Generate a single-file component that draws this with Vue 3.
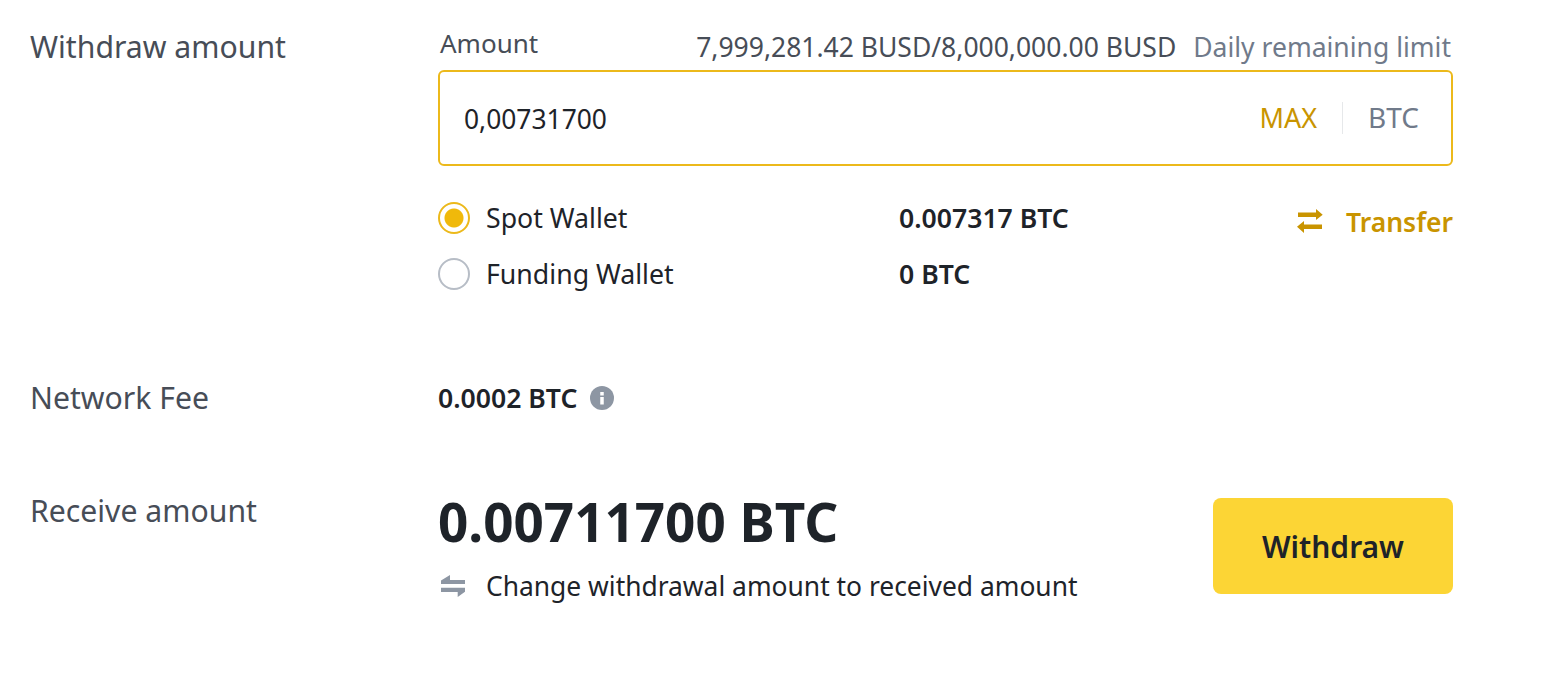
<template>
  <div class="page">
    <div class="row amount-row">
      <div class="label">Withdraw amount</div>
      <div class="content">
        <div class="amount-head">
          <span class="amount-title">Amount</span>
          <span class="limit">
            <span class="limit-value">7,999,281.42 BUSD/8,000,000.00 BUSD</span>
            <span class="limit-name">Daily remaining limit</span>
          </span>
        </div>
        <div class="amount-input">
          <span class="input-value">0,00731700</span>
          <span class="max">MAX</span>
          <span class="divider"></span>
          <span class="unit">BTC</span>
        </div>
        <div class="wallets">
          <div class="wallet-list">
            <div v-for="wallet in wallets" :key="wallet.name" class="wallet">
              <span class="radio" :class="{ checked: wallet.checked }"></span>
              <span class="wallet-name">{{ wallet.name }}</span>
              <span class="wallet-balance">{{ wallet.balance }}</span>
            </div>
          </div>
          <div class="transfer">
            <svg class="transfer-icon" viewBox="0 0 26 24" fill="currentColor">
              <path d="M1 3.500h18V0l6.700 5.700L19 11V8H1z" />
              <path d="M25 15.600H7V12L0 17.800 7 24v-4h18z" />
            </svg>
            <span class="transfer-text">Transfer</span>
          </div>
        </div>
      </div>
    </div>

    <div class="row fee-row">
      <div class="label">Network Fee</div>
      <div class="content fee">
        <span class="fee-value">0.0002 BTC</span>
        <svg class="info" viewBox="0 0 24 24">
          <circle cx="12" cy="12" r="12" fill="#8d96a3" />
          <rect x="10.250" y="11" width="3.500" height="7.500" fill="#fff" />
          <rect x="10.250" y="6" width="3.500" height="3.500" fill="#fff" />
        </svg>
      </div>
    </div>

    <div class="row receive-row">
      <div class="label">Receive amount</div>
      <div class="content receive">
        <div>
          <div class="receive-value">0.00711700 BTC</div>
          <div class="change">
            <svg class="change-icon" viewBox="0 0 26 22" fill="#8d96a3">
              <path d="M1 9V5.500L10 0v5h15v4z" />
              <path d="M1 12.700h24v4L17.700 22v-5H1z" />
            </svg>
            <span>Change withdrawal amount to received amount</span>
          </div>
        </div>
        <button class="withdraw">Withdraw</button>
      </div>
    </div>
  </div>
</template>

<script setup>
const wallets = [
  { name: 'Spot Wallet', balance: '0.007317 BTC', checked: true },
  { name: 'Funding Wallet', balance: '0 BTC', checked: false }
]
</script>

<style>
html,
body {
  background: #fff;
}
</style>

<style scoped>
.page {
  width: 1544px;
  height: 694px;
  box-sizing: border-box;
  padding: 28px 91px 0 30px;
  font-family: 'Noto Sans', 'Liberation Sans', sans-serif;
  color: #1e2329;
  background: #fff;
}

.row {
  display: flex;
}

.label {
  width: 408px;
  flex-shrink: 0;
  font-size: 30.2px;
  line-height: 38px;
  color: #474d57;
}

.content {
  flex: 1;
  min-width: 0;
}

.amount-head {
  display: flex;
  justify-content: space-between;
  align-items: flex-end;
  height: 38px;
  box-sizing: border-box;
  padding: 0 2px 4px;
}

.amount-title {
  margin-bottom: 2px;
  font-size: 26px;
  line-height: 34px;
  color: #474d57;
}

.limit {
  display: flex;
  gap: 17px;
  font-size: 26.5px;
  line-height: 30px;
}

.limit-value {
  color: #474d57;
}

.limit-name {
  color: #707a8a;
}

.amount-input {
  display: flex;
  align-items: center;
  height: 96px;
  box-sizing: border-box;
  margin-top: 4px;
  padding: 0 32px 0 24px;
  border: 2px solid #ecb91b;
  border-radius: 6px;
  font-size: 26.4px;
}

.input-value {
  flex: 1;
  margin-top: 2px;
}

.max {
  margin-bottom: 2px;
  font-size: 27px;
  color: #c99400;
}

.divider {
  width: 1px;
  height: 32px;
  margin: 0 25px;
  background: #e6e8ea;
}

.unit {
  margin-bottom: 2px;
  font-size: 28px;
  color: #707a8a;
}

.wallets {
  display: flex;
  justify-content: space-between;
  margin-top: 36px;
}

.wallet-list {
  display: flex;
  flex-direction: column;
  gap: 24px;
}

.wallet {
  display: flex;
  align-items: center;
  height: 32px;
  font-size: 26.7px;
}

.radio {
  width: 32px;
  height: 32px;
  box-sizing: border-box;
  border: 2px solid #b7bdc6;
  border-radius: 50%;
  background: #fff;
}

.radio.checked {
  border-color: #ecb91b;
  background: radial-gradient(circle, #f0b90b 0 9px, #fff 10px);
}

.wallet-name {
  width: 413px;
  margin: 0 0 2px 16px;
}

.wallet-balance {
  font-size: 26.6px;
  font-weight: 600;
}

.transfer {
  display: flex;
  align-items: center;
  gap: 23px;
  height: 38px;
  color: #c99400;
  font-size: 26.5px;
  font-weight: 600;
}

.transfer-icon {
  width: 26px;
  height: 24px;
}

.transfer-text {
  margin-top: 2px;
}

.fee-row {
  margin-top: 89px;
}

.fee {
  display: flex;
  align-items: center;
  gap: 13px;
}

.fee-value {
  font-size: 26.6px;
  font-weight: 600;
}

.info {
  width: 24px;
  height: 24px;
}

.receive-row {
  margin-top: 75px;
}

.receive {
  display: flex;
  justify-content: space-between;
}

.receive-value {
  font-size: 53px;
  line-height: 60px;
  font-weight: 700;
}

.change {
  display: flex;
  align-items: center;
  gap: 20px;
  margin-top: 16px;
  font-size: 26.4px;
  line-height: 36px;
}

.change-icon {
  width: 26px;
  height: 22px;
  margin-left: 2px;
}

.withdraw {
  width: 240px;
  height: 96px;
  margin-top: 6px;
  border: 0;
  border-radius: 8px;
  background: #fcd535;
  color: #1e2329;
  font: 600 30px 'Noto Sans', 'Liberation Sans', sans-serif;
}
</style>
